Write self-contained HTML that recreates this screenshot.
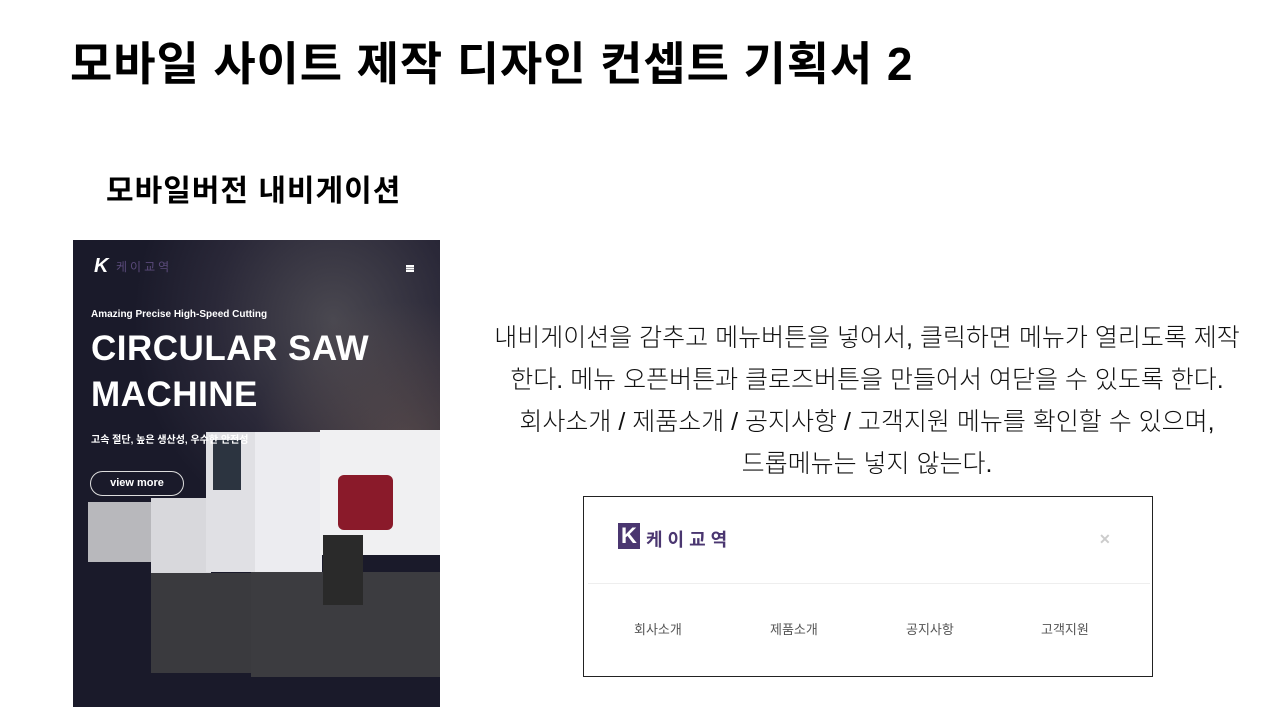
<!DOCTYPE html>
<html><head><meta charset="utf-8"><style>
*{margin:0;padding:0;box-sizing:border-box}
body{width:1280px;height:720px;background:#fff;position:relative;overflow:hidden;font-family:"Liberation Sans","Noto Sans CJK KR",sans-serif;color:#000}
.a{position:absolute;white-space:nowrap}
</style></head><body>
<div class="a" style="left:70px;top:28px;font-size:46px;font-weight:700;letter-spacing:0.9px">모바일 사이트 제작 디자인 컨셉트 기획서 2</div>
<div class="a" style="left:106px;top:166px;font-size:30px;font-weight:700;letter-spacing:1px">모바일버전 내비게이션</div>

<div class="a" style="left:73px;top:240px;width:367px;height:467px;overflow:hidden;background:radial-gradient(ellipse 200px 220px at 260px 80px,#4a4850 0%,#2a2838 60%,#1a1a2a 100%),#1c1c2c">
 <div class="a" style="left:180px;top:60px;width:220px;height:200px;background:radial-gradient(ellipse at 70% 70%,rgba(120,100,90,.5),rgba(0,0,0,0) 70%)"></div>
 <div class="a" style="left:15px;top:262px;width:65px;height:60px;background:#b8b8bc"></div>
 <div class="a" style="left:78px;top:258px;width:60px;height:75px;background:#d8d8dc"></div>
 <div class="a" style="left:78px;top:333px;width:100px;height:100px;background:#3a3a3e"></div>
 <div class="a" style="left:133px;top:192px;width:60px;height:140px;background:#e0e0e4"></div>
 <div class="a" style="left:140px;top:200px;width:28px;height:50px;background:#2c3440"></div>
 <div class="a" style="left:182px;top:192px;width:67px;height:140px;background:#ececf0"></div>
 <div class="a" style="left:247px;top:190px;width:120px;height:125px;background:#f0f0f2"></div>
 <div class="a" style="left:265px;top:235px;width:55px;height:55px;background:#8a1a2a;border-radius:6px"></div>
 <div class="a" style="left:178px;top:332px;width:189px;height:105px;background:#3c3c40"></div>
 <div class="a" style="left:250px;top:295px;width:40px;height:70px;background:#2a2a2a"></div>
 <div class="a" style="left:21px;top:15px;font-size:20px;font-weight:700;font-style:italic;color:#fff">K</div>
 <div class="a" style="left:43px;top:18px;font-size:12px;color:#5a4a7a;letter-spacing:3px">케이교역</div>
 <div class="a" style="left:333px;top:25px;width:8px;height:1.5px;background:#fff;box-shadow:0 2.5px 0 #fff,0 5px 0 #fff"></div>
 <div class="a" style="left:18px;top:69px;font-size:10px;font-weight:700;color:#fff">Amazing Precise High-Speed Cutting</div>
 <div class="a" style="left:18px;top:86px;font-size:35px;font-weight:700;color:#fff;line-height:46px;letter-spacing:0.5px">CIRCULAR SAW<br>MACHINE</div>
 <div class="a" style="left:18px;top:191px;font-size:10px;font-weight:700;color:#fff">고속 절단, 높은 생산성, 우수한 안전성</div>
 <div class="a" style="left:17px;top:231px;width:94px;height:25px;border:1px solid #ddd;border-radius:13px;color:#fff;font-size:11px;font-weight:700;text-align:center;line-height:23px">view more</div>
</div>

<div class="a" style="left:480px;top:317px;width:774px;text-align:center;font-size:25px;line-height:42px;color:#111;font-weight:300">내비게이션을 감추고 메뉴버튼을 넣어서, 클릭하면 메뉴가 열리도록 제작<br>한다. 메뉴 오픈버튼과 클로즈버튼을 만들어서 여닫을 수 있도록 한다.<br>회사소개 / 제품소개 / 공지사항 / 고객지원 메뉴를 확인할 수 있으며,<br>드롭메뉴는 넣지 않는다.</div>

<div class="a" style="left:583px;top:496px;width:570px;height:181px;border:1px solid #222;background:#fff">
 <div class="a" style="left:34px;top:26px;width:22px;height:26px;background:#4a3670;color:#fff;font-size:22px;font-weight:700;line-height:26px;text-align:center">K</div>
 <div class="a" style="left:62px;top:29px;font-size:18px;font-weight:700;color:#4a3670;letter-spacing:5px">케이교역</div>
 <div class="a" style="left:515px;top:34px;font-size:14px;font-weight:700;color:#ccc">✕</div>
 <div class="a" style="left:4px;top:86px;width:562px;height:1px;background:#eee"></div>
 <div class="a" style="left:50px;top:122px;font-size:13px;color:#555">회사소개</div>
 <div class="a" style="left:186px;top:122px;font-size:13px;color:#555">제품소개</div>
 <div class="a" style="left:322px;top:122px;font-size:13px;color:#555">공지사항</div>
 <div class="a" style="left:457px;top:122px;font-size:13px;color:#555">고객지원</div>
</div>
</body></html>
